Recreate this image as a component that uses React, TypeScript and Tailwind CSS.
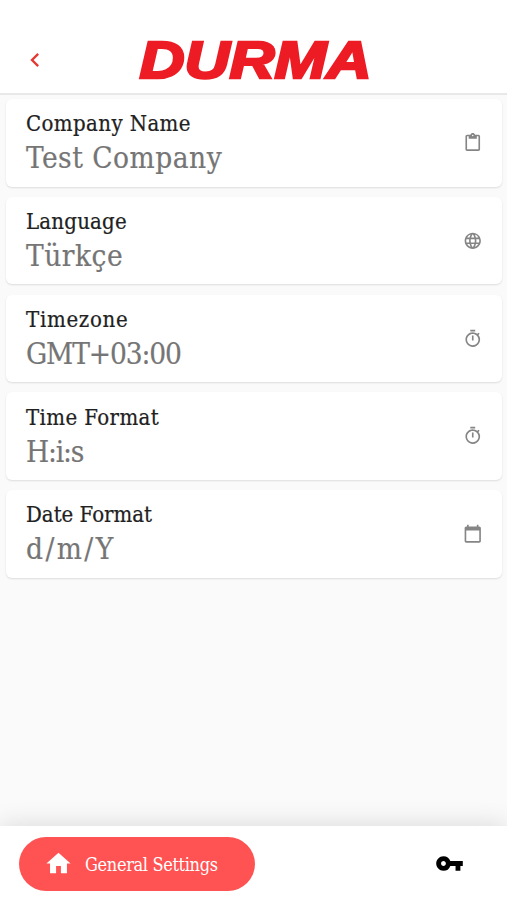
import { MdCalendarToday, MdChevronLeft, MdContentPaste, MdHome, MdLanguage, MdOutlineTimer, MdVpnKey } from "react-icons/md";
import type { IconType } from "react-icons";

interface Setting {
  label: string;
  value: string;
  icon: IconType;
  labelClass: string;
  valueClass: string;
}

const SETTINGS: Setting[] = [
  { label: "Company Name", value: "Test Company", icon: MdContentPaste,  labelClass: "tracking-[0.4px]", valueClass: "tracking-[0.5px]" },
  { label: "Language",     value: "Türkçe",       icon: MdLanguage,      labelClass: "tracking-[0.2px]", valueClass: "tracking-[0.5px]" },
  { label: "Timezone",     value: "GMT+03:00",    icon: MdOutlineTimer,  labelClass: "tracking-[0.7px]", valueClass: "tracking-[-1.1px]" },
  { label: "Time Format",  value: "H:i:s",        icon: MdOutlineTimer,  labelClass: "tracking-[0.4px]", valueClass: "tracking-[-1.2px]" },
  { label: "Date Format",  value: "d/m/Y",        icon: MdCalendarToday, labelClass: "tracking-normal",  valueClass: "tracking-[2.4px]" },
];

function Logo() {
  return (
    <svg width="260" height="64" viewBox="0 0 260 64" className="block overflow-visible">
      <text
        x="3.5"
        y="49.5"
        textLength="232"
        lengthAdjust="spacingAndGlyphs"
        className="fill-[#ed1c24] stroke-[#ed1c24] stroke-[2.5px] font-['Liberation_Sans',sans-serif] text-[52px] font-bold italic"
      >
        DURMA
      </text>
    </svg>
  );
}

function SettingCard({ label, value, icon: Icon, labelClass, valueClass }: Setting) {
  return (
    <div className="flex h-[87.5px] items-center justify-between rounded-md bg-white pr-5 pl-5 shadow-[0_1px_2px_rgba(0,0,0,0.12)]">
      <div className="pt-px whitespace-nowrap">
        <p className={`text-[22px] leading-[30px] text-[#212121] [-webkit-text-stroke:0.2px] ${labelClass}`}>{label}</p>
        <p className={`text-[29.5px] leading-[38px] text-[#757575] [-webkit-text-stroke:0.2px] ${valueClass}`}>{value}</p>
      </div>
      <Icon size={19.5} className="text-[#858585]" />
    </div>
  );
}

export default function App() {
  return (
    <div className="flex h-[900px] w-[507px] flex-col overflow-hidden bg-[#fafafa] font-['DejaVu_Serif_Condensed','DejaVu_Serif',serif] font-stretch-condensed">

      {/* Header */}
      <header className="flex h-[95px] shrink-0 items-center border-b-2 border-[#e8e8e8] bg-white pt-[26px] pl-[21px]">
        <button className="text-[#e53935]">
          <MdChevronLeft size={28} />
        </button>
        <div className="ml-[87px]">
          <Logo />
        </div>
      </header>

      <main className="flex flex-1 flex-col gap-[10.25px] pt-1 pr-[5px] pl-[6px]">
        {SETTINGS.map((s) => (
          <SettingCard key={s.label} {...s} />
        ))}
      </main>

      {/* Bottom navigation */}
      <nav className="flex h-[74px] shrink-0 items-center justify-between bg-white pt-px pr-[43px] pl-[19px] shadow-[0_-2px_24px_rgba(0,0,0,0.12)]">
        <button className="flex h-[54px] w-[236px] items-center rounded-full bg-[#ff5252] pl-[25px] text-white">
          <MdHome size={29} />
          <span className="ml-3 pt-px text-[18px] tracking-[-0.35px] whitespace-nowrap">General Settings</span>
        </button>
        <MdVpnKey size={29} className="text-black" />
      </nav>
    </div>
  );
}
